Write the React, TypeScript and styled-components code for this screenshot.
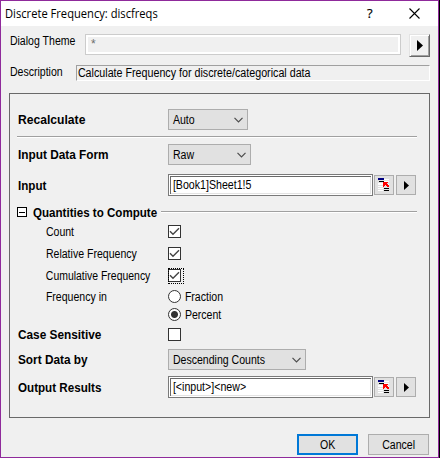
import React from 'react';
import styled, { createGlobalStyle, css } from 'styled-components';

const Global = createGlobalStyle`
  * { box-sizing: border-box; }
  body { margin: 0; background: #000; overflow: hidden; }
`;

const Dialog = styled.main`
  width: 439px;
  height: 458px;
  display: flex;
  flex-direction: column;
  background: #f0f0f0;
  border: 1px solid #8f2a9b;
  font: 12px/13px 'Liberation Sans', Arial, sans-serif;
  color: #000;
`;

const TitleBar = styled.header`
  height: 25px;
  flex: none;
  display: flex;
  align-items: center;
  background: #fff;
  padding: 0 18px 0 4px;
`;

const Title = styled.h1`
  margin: 0;
  flex: 1;
  font: 12px/17px 'Open Sans', 'Noto Sans', sans-serif;
  white-space: nowrap;
  transform: scaleX(0.93);
  transform-origin: left center;
`;

const HelpMark = styled.span`
  width: 8px;
  margin-right: 34px;
  font: 13px/17px 'Open Sans', sans-serif;
  -webkit-text-stroke: 0.2px #000;
`;

const Text = styled.span<{ $k?: number }>`
  display: block;
  padding-left: 1px;
  white-space: nowrap;
  transform: scaleX(${(p) => p.$k ?? 0.88});
  transform-origin: left center;
`;

const Strong = styled(Text)`
  font-weight: bold;
`;

const ThemeRow = styled.div`
  display: flex;
  height: 23px;
  margin: 8px 8px 0 8px;
`;

const ThemeLabel = styled.div`
  width: 76px;
  padding-top: 1px;
`;

const ThemeField = styled.div`
  width: 316px;
  height: 21px;
  margin-right: 8px;
  padding: 1px 5px 0;
  border: 1px solid #ccc;
  box-shadow: inset 0 0 0 2px #fff;
  color: #6d6d6d;
  line-height: 17px;
`;

const RaisedButton = styled.button`
  width: 21px;
  height: 23px;
  padding: 0;
  display: flex;
  align-items: center;
  justify-content: center;
  background: #f0f0f0;
  border: 1px solid;
  border-color: #e3e3e3 #696969 #696969 #e3e3e3;
  box-shadow: inset 1px 1px #fff, inset -1px -1px #a0a0a0;
`;

const DescriptionRow = styled.div`
  display: flex;
  height: 16px;
  margin: 8px 8px 0 8px;
`;

const DescriptionLabel = styled.div`
  width: 67px;
  padding-top: 1px;
`;

const DescriptionField = styled.div`
  width: 354px;
  height: 16px;
  padding: 1px 0 0 0;
  border: 1px solid;
  border-color: #a0a0a0 #fff #fff #a0a0a0;
`;

const Panel = styled.section`
  width: 421px;
  height: 325px;
  margin: 12px 0 0 8px;
  padding: 15px 12px 0 7px;
  border: 1px solid #696969;
`;

const Row = styled.div<{ $h: number; $mt?: number }>`
  display: flex;
  align-items: center;
  height: ${(p) => p.$h}px;
  margin-top: ${(p) => p.$mt ?? 0}px;
`;

const Label = styled.label<{ $indent?: boolean }>`
  width: 151px;
  flex: none;
  padding-left: ${(p) => (p.$indent ? 28 : 0)}px;
  padding-top: 2px;
`;

const etched = css`
  height: 2px;
  border-top: 1px solid #a0a0a0;
  border-bottom: 1px solid #fff;
`;

const Separator = styled.div`
  ${etched}
  width: 400px;
  margin-top: 6px;
`;

const GroupLine = styled.div`
  ${etched}
  width: 256px;
`;

const GroupTitle = styled.div`
  width: 129px;
  margin-left: 5px;
  padding-top: 3px;
`;

const Collapse = styled.span`
  width: 10px;
  height: 10px;
  display: flex;
  align-items: center;
  justify-content: center;
  border: 1px solid #000;
  background: #fff;
  &::after {
    content: '';
    width: 6px;
    height: 1px;
    background: #000;
  }
`;

const SelectBox = styled.button<{ $w: number }>`
  width: ${(p) => p.$w}px;
  height: 21px;
  padding: 0 4px 0 3px;
  display: flex;
  align-items: center;
  justify-content: space-between;
  background: #e1e1e1;
  border: 1px solid #adadad;
  font: inherit;
  color: inherit;
`;

const SelectText = styled(Text)`
  width: 0;
  padding-top: 1px;
`;

const Field = styled.div`
  width: 205px;
  height: 22px;
  flex: none;
  padding: 2px 0 0 3px;
  margin-right: 1px;
  background: #fff;
  border: 1px solid #7a7a7a;
  box-shadow: inset 0 0 0 1px #fff, inset 2px 2px #696969, inset -2px -2px #e3e3e3;
  line-height: 17px;
`;

const ToolButton = styled.button`
  width: 20px;
  height: 20px;
  flex: none;
  margin-right: 2px;
  padding: 0;
  display: flex;
  align-items: center;
  justify-content: center;
  background: #e1e1e1;
  border: 1px solid #adadad;
`;

const CheckBox = styled.span`
  position: relative;
  width: 13px;
  height: 13px;
  display: block;
  border: 1px solid #333;
  background: #fff;
`;

const FocusRing = styled.span`
  position: absolute;
  left: -1px;
  top: -2px;
  width: 16px;
  height: 16px;
  border: 1px dotted #000;
`;

const Radio = styled.span<{ $on?: boolean }>`
  width: 13px;
  height: 13px;
  margin-right: 3px;
  border: 1px solid #333;
  border-radius: 50%;
  background: ${(p) => (p.$on ? 'radial-gradient(circle, #333 3px, #fff 4px)' : '#fff')};
`;

const OptionText = styled(Text)`
  padding-top: 2px;
`;

const Footer = styled.footer`
  display: flex;
  justify-content: flex-end;
  gap: 10px;
  margin: 16px 9px 0 0;
`;

const PushButton = styled.button<{ $primary?: boolean }>`
  width: 61px;
  height: 21px;
  padding: 1px 0 0;
  display: flex;
  align-items: center;
  justify-content: center;
  background: #e1e1e1;
  border: ${(p) => (p.$primary ? '2px solid #0078d7' : '1px solid #adadad')};
  font: inherit;
  color: inherit;
`;

const ButtonText = styled(Text)`
  transform-origin: center;
`;

const CloseIcon = () => (
  <svg width="11" height="11" viewBox="0 0 11 11">
    <path d="M.5 .5l10 10M10.5 .5l-10 10" stroke="#000" strokeWidth="1.1" />
  </svg>
);

const Arrow = ({ size = 5 }: { size?: number }) => (
  <svg width={size} height={size * 2 - 1} viewBox={`0 0 ${size} ${size * 2 - 1}`}>
    <path d={`M0 0V${size * 2 - 1}L${size} ${size - 0.5}Z`} />
  </svg>
);

const Chevron = () => (
  <svg width="9" height="6" viewBox="0 0 9 6">
    <path d="M.5 .8l4 4 4-4" fill="none" stroke="#4c4c4c" strokeWidth="1.2" />
  </svg>
);

const RangeIcon = () => (
  <svg width="12" height="14" viewBox="0 0 12 14" shapeRendering="crispEdges">
    <path
      d="M6 1h5v1H6zM6 3h5v1H6zM0 5h5v2H0zM8 6h3v1H8zM0 8h5v1H0zM0 10h5v1H0zM0 12h5v1H0z"
      fill="#fff"
    />
    <path d="M0 0h6v2H0z" fill="#000080" />
    <path d="M1 3h5v1H1zM6 10h5v1H6zM6 12h5v1H6z" fill="#000" />
    <path d="M5 4h5v1H9v1h1v1h1v2H9V8H8V7H7v1H6v1H5z" fill="#f00" />
  </svg>
);

const Check = ({ on, focus }: { on?: boolean; focus?: boolean }) => (
  <CheckBox role="checkbox" aria-checked={!!on}>
    {on && (
      <svg width="11" height="11" viewBox="0 0 11 11" display="block">
        <path d="M1 5.2l3 3 6-6" fill="none" stroke="#444" strokeWidth="1.4" />
      </svg>
    )}
    {focus && <FocusRing />}
  </CheckBox>
);

const Select = ({ w, value }: { w: number; value: string }) => (
  <SelectBox $w={w}>
    <SelectText>{value}</SelectText>
    <Chevron />
  </SelectBox>
);

const RangeInput = ({ value }: { value: string }) => (
  <>
    <Field><Text $k={0.885}>{value}</Text></Field>
    <ToolButton><RangeIcon /></ToolButton>
    <ToolButton><Arrow /></ToolButton>
  </>
);

export default function App() {
  return (
    <>
      <Global />
      <Dialog>
        <TitleBar>
          <Title>Discrete Frequency: discfreqs</Title>
          <HelpMark>?</HelpMark>
          <CloseIcon />
        </TitleBar>
        <ThemeRow>
          <ThemeLabel><Text>Dialog Theme</Text></ThemeLabel>
          <ThemeField>*</ThemeField>
          <RaisedButton><Arrow size={6} /></RaisedButton>
        </ThemeRow>
        <DescriptionRow>
          <DescriptionLabel><Text>Description</Text></DescriptionLabel>
          <DescriptionField>
            <Text $k={0.892}>Calculate Frequency for discrete/categorical data</Text>
          </DescriptionField>
        </DescriptionRow>
        <Panel>
          <Row $h={21}>
            <Label><Strong $k={1.01}>Recalculate</Strong></Label>
            <Select w={80} value="Auto" />
          </Row>
          <Separator />
          <Row $h={21} $mt={6}>
            <Label><Strong $k={0.985}>Input Data Form</Strong></Label>
            <Select w={83} value="Raw" />
          </Row>
          <Row $h={22} $mt={9}>
            <Label><Strong $k={0.97}>Input</Strong></Label>
            <RangeInput value="[Book1]Sheet1!5" />
          </Row>
          <Row $h={10} $mt={11}>
            <Collapse />
            <GroupTitle><Strong $k={0.965}>Quantities to Compute</Strong></GroupTitle>
            <GroupLine />
          </Row>
          <Row $h={13} $mt={8}>
            <Label $indent><Text>Count</Text></Label>
            <Check on />
          </Row>
          <Row $h={13} $mt={9}>
            <Label $indent><Text>Relative Frequency</Text></Label>
            <Check on />
          </Row>
          <Row $h={13} $mt={9}>
            <Label $indent><Text $k={0.87}>Cumulative Frequency</Text></Label>
            <Check on focus />
          </Row>
          <Row $h={13} $mt={8}>
            <Label $indent><Text>Frequency in</Text></Label>
            <Radio />
            <OptionText>Fraction</OptionText>
          </Row>
          <Row $h={13} $mt={5}>
            <Label />
            <Radio $on />
            <OptionText>Percent</OptionText>
          </Row>
          <Row $h={13} $mt={7}>
            <Label><Strong $k={0.985}>Case Sensitive</Strong></Label>
            <Check />
          </Row>
          <Row $h={21} $mt={8}>
            <Label><Strong $k={0.985}>Sort Data by</Strong></Label>
            <Select w={138} value="Descending Counts" />
          </Row>
          <Row $h={22} $mt={6}>
            <Label><Strong $k={0.97}>Output Results</Strong></Label>
            <RangeInput value="[<input>]<new>" />
          </Row>
        </Panel>
        <Footer>
          <PushButton $primary><ButtonText>OK</ButtonText></PushButton>
          <PushButton><ButtonText>Cancel</ButtonText></PushButton>
        </Footer>
      </Dialog>
    </>
  );
}
